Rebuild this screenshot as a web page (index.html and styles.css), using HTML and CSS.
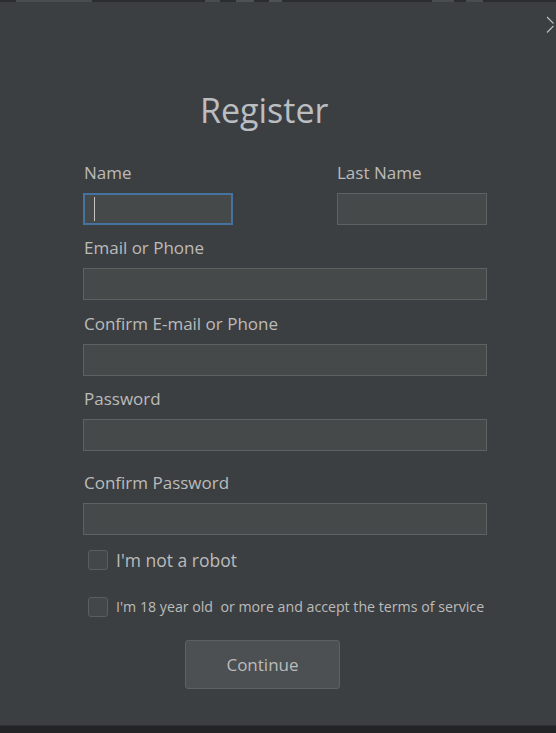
FILE: index.html
```html
<!DOCTYPE html>
<html>
<head>
<meta charset="utf-8">
<link rel="stylesheet" href="styles.css">
</head>
<body>
<div class="window">
  <div class="topstrip"></div>
  <svg class="close" width="10" height="18" viewBox="0 0 10 18"><path d="M1 1 L7.5 7.5 M7.5 10 L1 16.5" stroke="#b9bcbf" stroke-width="1.2" fill="none"/></svg>
  <main class="content">
    <h1 class="title">Register</h1>
    <div class="form">
      <div class="row">
        <div class="field short">
          <div class="label">Name</div>
          <div class="input focused"><span class="caret"></span></div>
        </div>
        <div class="field short">
          <div class="label">Last Name</div>
          <div class="input"></div>
        </div>
      </div>
      <div class="field g11">
        <div class="label">Email or Phone</div>
        <div class="input"></div>
      </div>
      <div class="field g12">
        <div class="label">Confirm E-mail or Phone</div>
        <div class="input"></div>
      </div>
      <div class="field g11">
        <div class="label">Password</div>
        <div class="input"></div>
      </div>
      <div class="field g20">
        <div class="label">Confirm Password</div>
        <div class="input"></div>
      </div>
      <label class="check big"><span class="box"></span><span>I'm not a robot</span></label>
      <label class="check small"><span class="box"></span><span>I'm 18 year old&nbsp; or more and accept the terms of service</span></label>
      <div class="btnrow"><button class="btn">Continue</button></div>
    </div>
  </main>
  <div class="bottomband"></div>
</div>
</body>
</html>
```
FILE: styles.css
```css
html, body {
  margin: 0;
  padding: 0;
  background: #3c3f41;
}
body {
  font-family: "Open Sans", "Noto Sans", sans-serif;
  color: #bbbbbb;
}
.window {
  position: relative;
  width: 556px;
  height: 733px;
  overflow: hidden;
  display: flex;
  flex-direction: column;
  background: #3c3f41;
}
.topstrip {
  height: 2px;
  flex: none;
  background:
    linear-gradient(90deg,
      #2b2d2f 0, #2b2d2f 16px,
      #4a4d50 16px, #4a4d50 92px,
      #2b2d2f 92px, #2b2d2f 205px,
      #4a4d50 205px, #4a4d50 220px,
      #2b2d2f 220px, #2b2d2f 236px,
      #4d5257 236px, #4d5257 254px,
      #2b2d2f 254px, #2b2d2f 269px,
      #4d5257 269px, #4d5257 282px,
      #2b2d2f 282px, #2b2d2f 432px,
      #4a4d50 432px, #4a4d50 454px,
      #2b2d2f 454px, #2b2d2f 466px,
      #4a4d50 466px, #4a4d50 483px,
      #2b2d2f 483px);
}
.close {
  position: absolute;
  right: 0;
  top: 16px;
}
.content {
  flex: 1;
  display: flex;
  flex-direction: column;
}
.title {
  margin: 88px 0 0 200px;
  font-size: 34px;
  line-height: 40px;
  font-weight: 400;
  color: #bbbec1;
}
.form {
  margin: 31px 0 0 83px;
  width: 404px;
  display: flex;
  flex-direction: column;
}
.row {
  display: flex;
  justify-content: space-between;
}
.field {
  display: flex;
  flex-direction: column;
}
.field.short {
  width: 150px;
}
.g11 { margin-top: 11px; }
.g12 { margin-top: 12px; }
.g20 { margin-top: 20px; }
.label {
  font-size: 17px;
  line-height: 22px;
  padding: 1px 0 0 1px;
  margin-bottom: 9px;
  white-space: nowrap;
}
.row .field.short:last-child .label {
  padding-left: 0;
}
.input {
  box-sizing: border-box;
  height: 32px;
  background: #45494a;
  border: 1px solid #5e6162;
  display: flex;
  align-items: center;
}
.input.focused {
  border: 2px solid #4672a0;
}
.caret {
  width: 1px;
  height: 24px;
  margin-left: 9px;
  background: #c4c4c4;
}
.check {
  display: flex;
  align-items: center;
  margin-left: 5px;
}
.box {
  box-sizing: border-box;
  width: 20px;
  height: 20px;
  border: 1.5px solid #5b5e60;
  border-radius: 3px;
  background: #43474a;
  margin-right: 8px;
  flex: none;
}
.check.big {
  margin-top: 15px;
  height: 20px;
  font-size: 17.5px;
  line-height: 20px;
}
.check.small {
  margin-top: 27px;
  height: 20px;
  font-size: 14.2px;
  line-height: 20px;
  white-space: nowrap;
}
.btnrow {
  margin-top: 23px;
  padding-left: 102px;
}
.btn {
  box-sizing: border-box;
  width: 155px;
  height: 49px;
  background: #4c5052;
  border: 1px solid #5e6162;
  border-radius: 3px;
  color: #bbbbbb;
  font-family: "Open Sans", "Noto Sans", sans-serif;
  font-size: 17px;
  padding: 0;
}
.bottomband {
  height: 7px;
  flex: none;
  background: #232425;
  border-top: 1px solid #2d2f30;
}
```
